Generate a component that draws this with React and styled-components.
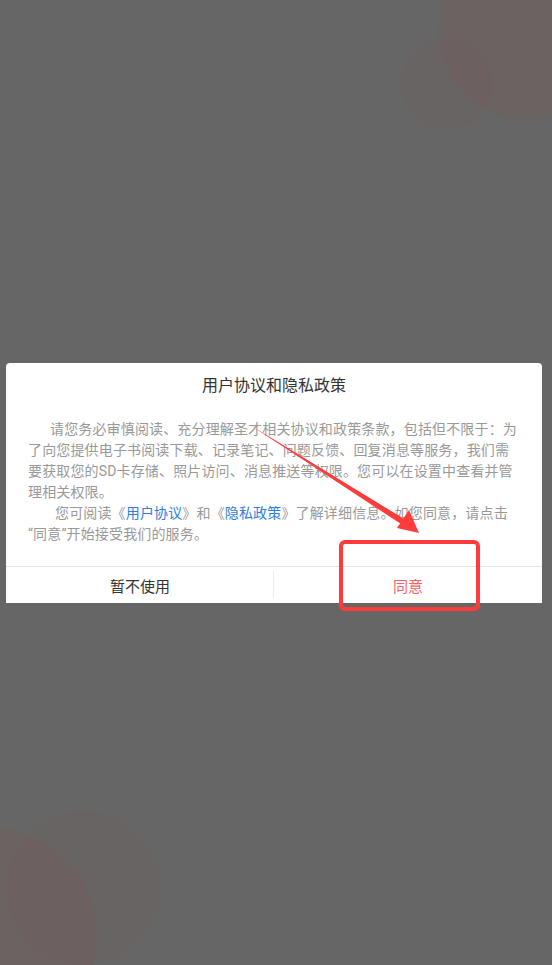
import React from "react";
import styled, { createGlobalStyle } from "styled-components";

const GlobalStyle = createGlobalStyle`
  * {
    margin: 0;
    padding: 0;
    box-sizing: border-box;
  }
  body {
    margin: 0;
    background: #666666;
    font-family: Roboto, "Noto Sans CJK SC", sans-serif;
  }
`;

function App() {
  return (
    <Page>
      <GlobalStyle />
      <Blob $x={528} $y={30} $r={90} $a={0.075} />
      <Blob $x={447} $y={84} $r={46} $a={0.03} />
      <Blob $x={-10} $y={935} $r={107} $a={0.075} />
      <Blob $x={83} $y={888} $r={77} $a={0.03} />

      <Dialog>
        <Title>用户协议和隐私政策</Title>
        <Body>
          <Para $indent={22}>
            请您务必审慎阅读、充分理解圣才相关协议和政策条款，包括但不限于：为了向您提供电子书阅读下载、记录笔记、问题反馈、回复消息等服务，我们需要获取您的SD卡存储、照片访问、消息推送等权限。您可以在设置中查看并管理相关权限。
          </Para>
          <Para $indent={27}>
            您可阅读《<Link>用户协议</Link>》和《<Link>隐私政策</Link>》了解详细信息。如您同意，请点击{"\u200B"}“同意”开始接受我们的服务。
          </Para>
        </Body>
        <Actions>
          <ActionButton>暂不使用</ActionButton>
          <ActionButton $primary>同意</ActionButton>
        </Actions>
      </Dialog>

      <Arrow width="552" height="965" viewBox="0 0 552 965">
        <polygon points="250,425 407,521 405,525" fill="#ff3b3b" />
        <polygon points="250,425 404,519 401,524" fill="#ff3b3b" />
        <polygon points="419,533 397,528 409,510" fill="#ff3b3b" />
      </Arrow>
      <Highlight />
    </Page>
  );
}

const Page = styled.div`
  position: relative;
  width: 552px;
  height: 965px;
  overflow: hidden;
  background: #666666;
  display: flex;
  flex-direction: column;
  align-items: flex-start;
  padding: 363px 0 0 6px;
`;

const Blob = styled.div`
  position: absolute;
  left: ${(p) => p.$x - p.$r}px;
  top: ${(p) => p.$y - p.$r}px;
  width: ${(p) => p.$r * 2}px;
  height: ${(p) => p.$r * 2}px;
  border-radius: 50%;
  background: rgba(180, 60, 50, ${(p) => p.$a});
`;

const Dialog = styled.div`
  position: relative;
  width: 536px;
  background: #ffffff;
  border-radius: 4px 4px 0 0;
  display: flex;
  flex-direction: column;
`;

const Title = styled.div`
  padding-top: 12px;
  height: 34px;
  line-height: 22px;
  text-align: center;
  font-size: 16px;
  color: #333333;
`;

const Body = styled.div`
  padding: 22px 22px 21px 22px;
`;

const Para = styled.p`
  font-size: 14px;
  letter-spacing: 0.15px;
  line-height: 21px;
  color: #999999;
  text-indent: ${(p) => p.$indent}px;
  text-align: left;
`;

const Link = styled.span`
  color: #2b7de0;
`;

const Actions = styled.div`
  display: grid;
  grid-template-columns: 1fr 1fr;
  border-top: 1px solid #e3e3e3;
  height: 37px;
`;

const ActionButton = styled.div`
  display: flex;
  align-items: center;
  justify-content: center;
  font-size: 15px;
  color: ${(p) => (p.$primary ? "#ff6161" : "#333333")};
  position: relative;

  &:first-child::after {
    content: "";
    position: absolute;
    right: 0;
    top: 4px;
    bottom: 4px;
    width: 1px;
    background: #ececec;
  }
`;

const Arrow = styled.svg`
  position: absolute;
  left: 0;
  top: 0;
  pointer-events: none;
`;

const Highlight = styled.div`
  position: absolute;
  left: 339px;
  top: 540px;
  width: 141px;
  height: 71px;
  border: 4.5px solid #ff3b3b;
  border-radius: 6px;
  pointer-events: none;
`;

export default App;
